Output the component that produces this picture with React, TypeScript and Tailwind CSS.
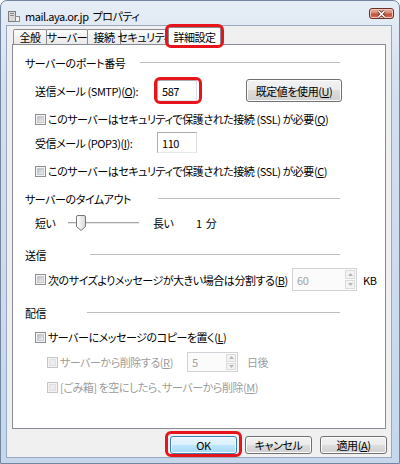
import React from "react";

const F = "font-['Noto_Sans_CJK_JP','Noto_Sans',sans-serif] [font-feature-settings:'palt'] text-[11px] leading-[14px] tracking-[-0.45px]";

function Check({ disabled }: { disabled?: boolean }) {
  return disabled ? (
    <span className="inline-flex w-[11px] h-[11px] shrink-0 border border-[#c4c4c4] bg-[#f4f4f4] p-px">
      <span className="flex-1 bg-[#ececec] border border-[#e0e0e0]" />
    </span>
  ) : (
    <span className="inline-flex w-[11px] h-[11px] shrink-0 border border-[#8e8f8f] bg-[#f4f4f4] p-px">
      <span className="flex-1 bg-gradient-to-br from-[#b9bec4] to-[#eef0f2] border border-[#c6cacf]" />
    </span>
  );
}

function Btn({ children, def, className }: { children: React.ReactNode; def?: boolean; className: string }) {
  return (
    <div
      className={
        def
          ? `${className} flex items-center justify-center whitespace-nowrap rounded-[3px] border border-[#3c7fb1] bg-[linear-gradient(#eaf6fd,#d9f0fc_50%,#bee6fd_50%,#a7d9f5)] shadow-[inset_0_0_0_1px_#f4fbff]`
          : `${className} flex items-center justify-center whitespace-nowrap rounded-[3px] border border-[#707070] bg-[linear-gradient(#f2f2f2,#ebebeb_50%,#dddddd_50%,#cfcfcf)] shadow-[inset_0_0_0_1px_#fcfcfc]`
      }
    >
      {children}
    </div>
  );
}

function Spin({ value, className }: { value: string; className: string }) {
  return (
    <div className={`${className} flex border border-[#cfd3d8] bg-[#fbfbfb] text-[#a3a3a3]`}>
      <div className="flex-1 pl-[4px] flex items-center">{value}</div>
      <div className="w-[12px] flex flex-col gap-px p-px">
        <div className="flex-1 border border-[#dadada] bg-[#f3f3f3] flex items-center justify-center">
          <svg width="5" height="3" viewBox="0 0 5 3"><path d="M0 3 L2.5 0 L5 3Z" fill="#b5b5b5" /></svg>
        </div>
        <div className="flex-1 border border-[#dadada] bg-[#f3f3f3] flex items-center justify-center">
          <svg width="5" height="3" viewBox="0 0 5 3"><path d="M0 0 L2.5 3 L5 0Z" fill="#b5b5b5" /></svg>
        </div>
      </div>
    </div>
  );
}

function Heading({ text, w, className }: { text: string; w: string; className: string }) {
  return (
    <div className={`${className} flex items-center h-[14px] pl-[12px] pr-[45px]`}>
      <span className={`${w} shrink-0 whitespace-nowrap`}>{text}</span>
      <span className="flex-1 h-px bg-[#bdbdbd] -mt-[2px]" />
    </div>
  );
}

export default function App() {
  return (
    <div className={`${F} w-[400px] h-[464px] flex flex-col border border-[#72869f] rounded-t-[7px] overflow-hidden bg-[linear-gradient(180deg,#e6edf6_0%,#d3dfee_20%,#c6d7ec_100%)] text-black`}>
      {/* title bar */}
      <div className="h-[24px] flex items-start shrink-0">
        <div className="flex items-center pt-[8px] pl-[7px]">
          <svg width="12" height="11" viewBox="0 0 12 11">
            <rect x="0.5" y="0.5" width="7" height="10" fill="#d8d8d8" stroke="#7d7d7d" />
            <rect x="2" y="2" width="4" height="1" fill="#8a8a8a" />
            <rect x="2" y="4" width="4" height="1" fill="#8a8a8a" />
            <rect x="7.5" y="5.5" width="4" height="5" fill="#f4f4f4" stroke="#8a8a8a" />
          </svg>
          <span className="ml-[5px] whitespace-nowrap">mail.aya.or.jp&nbsp;&nbsp;プロパティ</span>
        </div>
        <div className="ml-auto mr-[5px] mt-[7px] w-[25px] h-[11px] rounded-[3px] border border-[#6b2d25] bg-[linear-gradient(#e9b3a3,#d98a76_45%,#c44c3a_55%,#d2735c)] flex items-center justify-center shadow-[inset_0_0_0_1px_#f1c7bb]">
          <svg width="9" height="8" viewBox="0 0 9 8">
            <path d="M1.5 1 L7.5 7 M7.5 1 L1.5 7" stroke="#5a2a22" strokeWidth="3" />
            <path d="M1.5 1 L7.5 7 M7.5 1 L1.5 7" stroke="#ffffff" strokeWidth="1.6" />
          </svg>
        </div>
      </div>

      {/* client */}
      <div className="flex-1 ml-[5px] mr-[7px] mb-[5px] border border-[#97a9c1] bg-[#f0f0f0] flex flex-col">
        {/* tabs */}
        <div className="flex items-end h-[18px] pl-[6px] relative z-10 whitespace-nowrap">
          <div className="w-[34px] h-[15px] border border-b-0 border-[#898c95] rounded-t-[2px] bg-gradient-to-b from-[#fbfbfb] to-[#e9e9e9] flex items-center justify-center">全般</div>
          <div className="-ml-px w-[42px] h-[15px] border border-b-0 border-[#898c95] rounded-t-[2px] bg-gradient-to-b from-[#fbfbfb] to-[#e9e9e9] flex items-center justify-center">サーバー</div>
          <div className="-ml-px w-[34px] h-[15px] border border-b-0 border-[#898c95] rounded-t-[2px] bg-gradient-to-b from-[#fbfbfb] to-[#e9e9e9] flex items-center justify-center">接続</div>
          <div className="-ml-px w-[49px] h-[15px] border border-b-0 border-[#898c95] rounded-t-[2px] bg-gradient-to-b from-[#fbfbfb] to-[#e9e9e9] flex items-center justify-center">セキュリティ</div>
          <div className="-ml-px w-[53px] h-[18px] -mb-px border border-b-0 border-[#898c95] rounded-t-[2px] bg-white flex items-center justify-center relative">
            詳細設定
            <div className="absolute -left-[4px] -right-[4px] -top-[4px] -bottom-[3px] border-[3px] border-[#e8141b] rounded-[6px]" />
          </div>
        </div>

        {/* panel */}
        <div className="ml-[5px] mr-[5px] h-[385px] border border-[#898c95] bg-white flex flex-col">
          <Heading className="mt-[11px]" w="w-[115px]" text="サーバーのポート番号" />

          <div className="mt-[9px] h-[23px] flex items-center pl-[22px]">
            <span className="w-[122px] shrink-0 whitespace-nowrap">送信メール (SMTP)(<u>O</u>):</span>
            <div className="relative w-[40px] h-[21px] border border-[#abadb3] border-b-[#e3e9ef] border-r-[#dbdfe6] bg-white flex items-center pl-[4px]">
              587
              <div className="absolute -left-[4px] -right-[6px] -top-[4px] -bottom-[4px] border-[3px] border-[#e8141b] rounded-[6px]" />
            </div>
            <Btn className="ml-[49px] w-[96px] h-[23px]">既定値を使用(<u>U</u>)</Btn>
          </div>

          <div className="mt-[10px] h-[14px] flex items-center pl-[22px] gap-[2px] whitespace-nowrap">
            <Check />
            <span>このサーバーはセキュリティで保護された接続 (SSL) が必要(<u>Q</u>)</span>
          </div>

          <div className="mt-[6px] h-[21px] flex items-center pl-[22px]">
            <span className="w-[122px] shrink-0 whitespace-nowrap">受信メール (POP3)(<u>I</u>):</span>
            <div className="w-[40px] h-[21px] border border-[#abadb3] border-b-[#e3e9ef] border-r-[#dbdfe6] bg-white flex items-center pl-[4px]">110</div>
          </div>

          <div className="mt-[11px] h-[14px] flex items-center pl-[22px] gap-[2px] whitespace-nowrap">
            <Check />
            <span>このサーバーはセキュリティで保護された接続 (SSL) が必要(<u>C</u>)</span>
          </div>

          <Heading className="mt-[14px]" w="w-[133px]" text="サーバーのタイムアウト" />

          <div className="mt-[9px] h-[16px] flex items-center pl-[22px] whitespace-nowrap">
            <span className="w-[33px] shrink-0">短い</span>
            <div className="relative w-[71px] h-[16px] flex items-center">
              <div className="w-full h-[3px] border-t border-[#a7a7a7] border-b border-b-white bg-[#e4e4e4]" />
              <svg className="absolute left-[8px] top-0" width="10" height="16" viewBox="0 0 10 16">
                <defs>
                  <linearGradient id="th" x1="0" y1="0" x2="1" y2="0">
                    <stop offset="0" stopColor="#ffffff" />
                    <stop offset="1" stopColor="#d9d9d9" />
                  </linearGradient>
                </defs>
                <path d="M2 0.5 H8 Q9.5 0.5 9.5 2 V11.5 L5 15.5 L0.5 11.5 V2 Q0.5 0.5 2 0.5Z" fill="url(#th)" stroke="#777" />
              </svg>
            </div>
            <span className="ml-[14px] w-[43px] shrink-0">長い</span>
            <span>1&nbsp;&nbsp;分</span>
          </div>

          <Heading className="mt-[17px]" w="w-[65px]" text="送信" />

          <div className="mt-[6px] h-[23px] flex items-center pl-[22px] whitespace-nowrap">
            <div className="w-[257px] shrink-0 flex items-center gap-[2px]">
              <Check />
              <span>次のサイズよりメッセージが大きい場合は分割する(<u>B</u>)</span>
            </div>
            <Spin className="w-[65px] h-[23px]" value="60" />
            <span className="ml-[6px]">KB</span>
          </div>

          <Heading className="mt-[15px]" w="w-[62px]" text="配信" />

          <div className="mt-[10px] h-[14px] flex items-center pl-[22px] gap-[2px] whitespace-nowrap">
            <Check />
            <span>サーバーにメッセージのコピーを置く(<u>L</u>)</span>
          </div>

          <div className="mt-[8px] h-[20px] flex items-center pl-[34px] whitespace-nowrap text-[#9c9c9c]">
            <div className="w-[140px] shrink-0 flex items-center gap-[2px]">
              <Check disabled />
              <span>サーバーから削除する(<u>R</u>)</span>
            </div>
            <Spin className="w-[51px] h-[20px]" value="5" />
            <span className="ml-[9px]">日後</span>
          </div>

          <div className="mt-[8px] h-[14px] flex items-center pl-[34px] gap-[2px] whitespace-nowrap text-[#9c9c9c]">
            <Check disabled />
            <span>[ごみ箱] を空にしたら、サーバーから削除(<u>M</u>)</span>
          </div>
        </div>

        {/* buttons */}
        <div className="mt-[7px] flex justify-end gap-[8px] pr-[4px]">
          <div className="relative">
            <Btn def className="w-[67px] h-[18px]">OK</Btn>
            <div className="absolute -left-[5px] -right-[5px] -top-[5px] -bottom-[3px] border-[3px] border-[#e8141b] rounded-[6px]" />
          </div>
          <Btn className="w-[67px] h-[18px]">キャンセル</Btn>
          <Btn className="w-[67px] h-[18px]">適用(<u>A</u>)</Btn>
        </div>
      </div>
    </div>
  );
}
